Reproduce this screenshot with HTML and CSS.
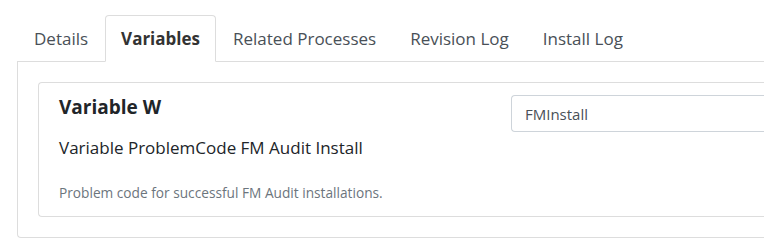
FILE: index.html
```html
<!DOCTYPE html>
<html>
<head>
    <title>Variables</title>
    <link rel="stylesheet" href="styles.css">
</head>
<body>
    <div class="wrapper">
        <ul class="nav-tabs">
            <li class="tab">Details</li>
            <li class="tab active">Variables</li>
            <li class="tab">Related Processes</li>
            <li class="tab">Revision Log</li>
            <li class="tab">Install Log</li>
        </ul>
        <div class="tab-panel">
            <div class="var-card">
                <div class="var-info">
                    <h4 class="var-name">Variable W</h4>
                    <p class="var-title">Variable ProblemCode FM Audit Install</p>
                    <p class="var-desc">Problem code for successful FM Audit installations.</p>
                </div>
                <div class="var-value">
                    <input type="text" class="form-control" value="FMInstall">
                </div>
            </div>
        </div>
    </div>
</body>
</html>
```

FILE: styles.css
```css
body {
    font-family: "Open Sans", "Noto Sans", sans-serif;
    margin: 0;
    padding: 0;
    background-color: #fff;
    color: #212529;
    overflow: hidden;
}

.wrapper {
    width: 747px;
    margin-left: 17px;
    padding-top: 15px;
}

.nav-tabs {
    display: flex;
    list-style: none;
    margin: 0;
    padding: 0;
    border-bottom: 1px solid #ddd;
}

.tab {
    font-size: 17px;
    line-height: 27px;
    padding: 9px 16px;
    margin-bottom: -1px;
    color: #495057;
    border: 1px solid transparent;
    border-radius: 4px 4px 0 0;
}

.tab.active {
    font-weight: bold;
    color: #333;
    background-color: #fff;
    padding: 9px 15px;
    border-color: #ddd #ddd #fff;
}

.tab-panel {
    border: 1px solid #ddd;
    border-top: none;
    border-right: none;
    border-radius: 0 0 0 4px;
    padding: 20px 0 20px 20px;
}

.var-card {
    display: grid;
    grid-template-columns: 452px 1fr;
    border: 1px solid #ddd;
    border-right: none;
    border-radius: 4px 0 0 4px;
    padding: 12px 0 13px 20px;
}

.var-name {
    font-size: 19px;
    line-height: 24px;
    font-weight: bold;
    margin: 0;
}

.var-title {
    font-size: 17px;
    line-height: 24px;
    margin: 17px 0 0;
}

.var-desc {
    font-size: 13.7px;
    line-height: 20px;
    color: #6c757d;
    margin: 23px 0 0;
}

.form-control {
    box-sizing: border-box;
    width: 100%;
    height: 37px;
    padding: 0 13px;
    font-family: inherit;
    font-size: 15px;
    color: #495057;
    border: 1px solid #ced4da;
    border-right: none;
    border-radius: 4px 0 0 4px;
}
```
